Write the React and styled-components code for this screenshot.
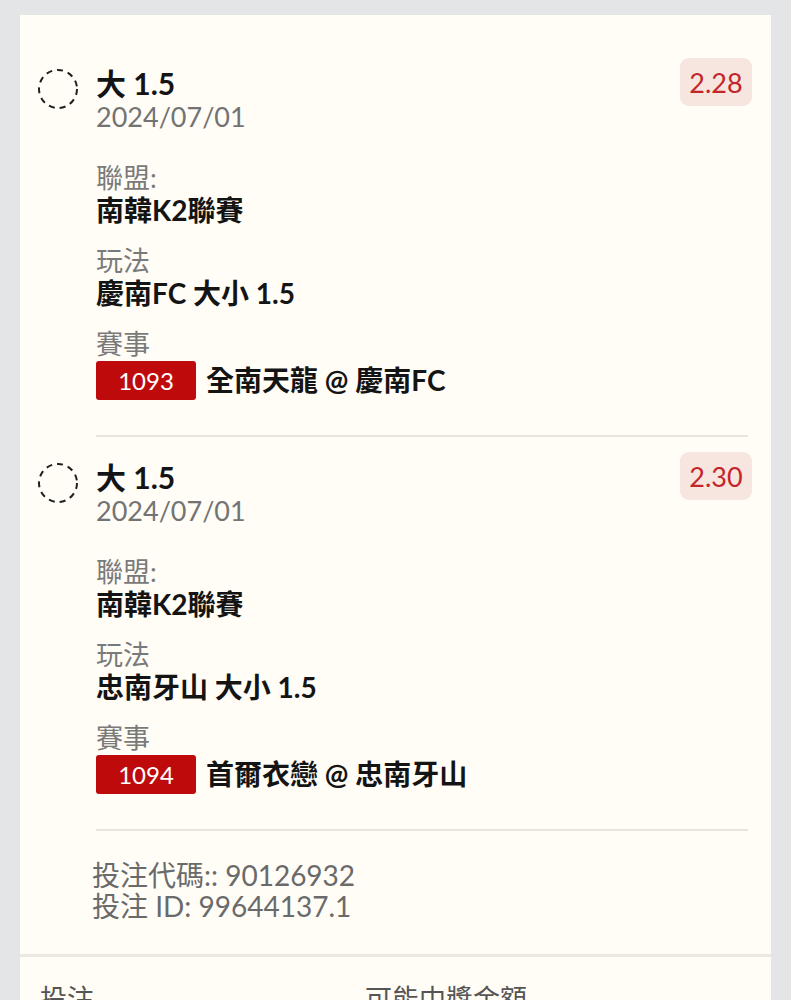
import React from "react";
import styled, { createGlobalStyle } from "styled-components";

const Global = createGlobalStyle`
  html, body { margin: 0; padding: 0; background: #e4e5e7; }
  body { font-family: Lato, "Noto Sans CJK TC", sans-serif; }
`;

const Page = styled.div`
  padding: 15px 20px 0 20px;
  height: 985px;
  overflow: hidden;
`;

const Card = styled.div`
  background: #fffdf6;
  padding-top: 28px;
`;

const Item = styled.div`
  display: grid;
  grid-template-columns: 57px 1fr auto;
  padding: 23px 19px 0 19px;
`;

const IconCell = styled.div`
  grid-column: 1 / 2;
  grid-row: 1;
  padding-top: 2px;
  margin-left: -2px;
`;

const Body = styled.div`
  grid-column: 2 / 4;
  grid-row: 1;
  padding-bottom: 35px;
  border-bottom: 2px solid #e8e5df;
  margin-right: 4px;
`;

const Title = styled.div`
  font-size: 30px;
  font-weight: 700;
  line-height: 34px;
  color: #141414;
`;

const DateText = styled.div`
  font-size: 27px;
  line-height: 34px;
  color: #737373;
`;

const Fields = styled.div`
  margin-top: 27px;
  display: flex;
  flex-direction: column;
  gap: 17px;
`;

const Field = styled.div`
  display: flex;
  flex-direction: column;
`;

const Label = styled.div`
  font-size: 27px;
  line-height: 33px;
  color: #7a7a7a;
`;

const Value = styled.div`
  font-size: 28px;
  line-height: 33px;
  font-weight: 700;
  color: #141414;
  display: flex;
  align-items: center;
  gap: 10px;
`;

const MatchNo = styled.span`
  display: inline-flex;
  align-items: center;
  justify-content: center;
  width: 100px;
  height: 39px;
  background: #bf0a0c;
  color: #fff;
  border-radius: 3px;
  font-size: 24px;
  font-weight: 400;
  margin-top: 1px;
`;

const Odds = styled.div`
  grid-column: 3 / 4;
  grid-row: 1;
  align-self: start;
  justify-self: end;
  margin-top: -8px;
  background: #f7e5df;
  color: #c3262a;
  border-radius: 9px;
  width: 72px;
  height: 48px;
  display: flex;
  align-items: center;
  justify-content: center;
  font-size: 27px;
  position: relative;
`;

const Footer = styled.div`
  padding: 29px 19px 32px 72px;
  border-bottom: 3px solid #ebe8e2;
  color: #6a6a6a;
  font-size: 28px;
  line-height: 31px;
`;

const Summary = styled.div`
  display: grid;
  grid-template-columns: 325px 1fr;
  padding: 25px 20px 0 20px;
  font-size: 27px;
  line-height: 34px;
  color: #555;
`;

const DashedCircle = () => (
  <svg width="42" height="42" viewBox="0 0 42 42">
    <circle
      cx="21"
      cy="21"
      r="19"
      fill="none"
      stroke="#1e1e1e"
      strokeWidth="2"
      strokeDasharray="6 5"
      strokeLinecap="butt"
    />
  </svg>
);

const bets = [
  {
    odds: "2.28",
    title: "大 1.5",
    date: "2024/07/01",
    league: "南韓K2聯賽",
    play: "慶南FC 大小 1.5",
    no: "1093",
    match: "全南天龍 @ 慶南FC",
  },
  {
    odds: "2.30",
    title: "大 1.5",
    date: "2024/07/01",
    league: "南韓K2聯賽",
    play: "忠南牙山 大小 1.5",
    no: "1094",
    match: "首爾衣戀 @ 忠南牙山",
  },
];

export default function App() {
  return (
    <>
      <Global />
      <Page>
        <Card>
          {bets.map((b) => (
            <Item key={b.no}>
              <IconCell>
                <DashedCircle />
              </IconCell>
              <Body>
                <Title>{b.title}</Title>
                <DateText>{b.date}</DateText>
                <Fields>
                  <Field>
                    <Label>聯盟:</Label>
                    <Value>{b.league}</Value>
                  </Field>
                  <Field>
                    <Label>玩法</Label>
                    <Value>{b.play}</Value>
                  </Field>
                  <Field>
                    <Label>賽事</Label>
                    <Value>
                      <MatchNo>{b.no}</MatchNo>
                      {b.match}
                    </Value>
                  </Field>
                </Fields>
              </Body>
              <Odds>{b.odds}</Odds>
            </Item>
          ))}
          <Footer>
            <div>投注代碼:: 90126932</div>
            <div>投注 ID: 99644137.1</div>
          </Footer>
          <Summary>
            <div>投注</div>
            <div>可能中獎金額</div>
          </Summary>
        </Card>
      </Page>
    </>
  );
}
